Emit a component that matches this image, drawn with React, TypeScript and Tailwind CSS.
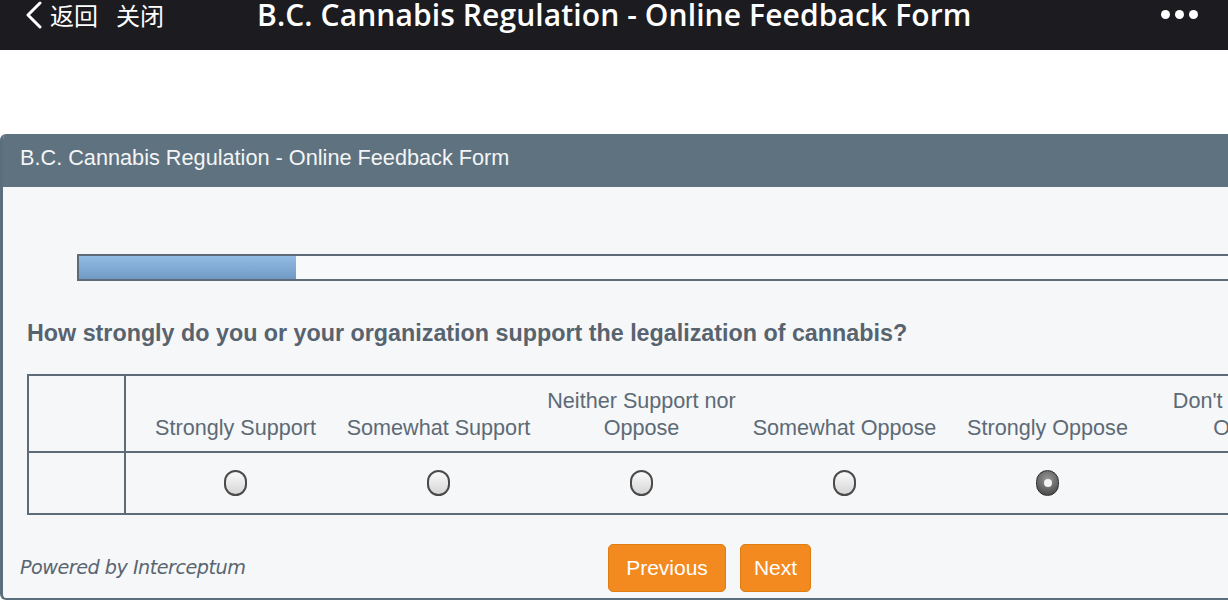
import React from 'react';

const options = [
  'Strongly Support',
  'Somewhat Support',
  'Neither Support nor Oppose',
  'Somewhat Oppose',
  'Strongly Oppose',
  "Don't Know / No Opinion",
];

function Radio({ checked }: { checked?: boolean }) {
  if (checked) {
    return (
      <span className="flex h-[26px] w-[23px] items-center justify-center rounded-full border-[1.5px] border-[#2e2e2e] bg-[radial-gradient(circle_at_50%_35%,#9a9a9a,#3a3a3a)]">
        <span className="h-[8px] w-[8px] rounded-full bg-[#f4f4f4]" />
      </span>
    );
  }
  return (
    <span className="block h-[26px] w-[23px] rounded-full border-2 border-[#4a4a4a] bg-[linear-gradient(180deg,#fafafa,#d6d6d6)]" />
  );
}

export default function App() {
  return (
    <div className="h-[600px] w-[1228px] overflow-hidden bg-white font-['Liberation_Sans',Arial,sans-serif]">
      {/* top bar */}
      <div className="flex h-[50px] items-start bg-[#1c1b20] text-white">
        <div className="flex h-[30px] items-center pl-[24px]">
          <svg width="20" height="28" viewBox="0 0 20 28" fill="none">
            <path d="M16 2 L4 14 L16 26" stroke="white" strokeWidth="3" strokeLinecap="round" strokeLinejoin="round" />
          </svg>
          <span className="ml-[6px] font-['Noto_Sans_CJK_SC',sans-serif] text-[24px] leading-[30px]">返回</span>
          <span className="ml-[18px] font-['Noto_Sans_CJK_SC',sans-serif] text-[24px] leading-[30px]">关闭</span>
        </div>
        <div className="ml-[93px] text-[30px] font-semibold leading-[30px] tracking-[0.1px] font-['Open_Sans',sans-serif]">
          B.C. Cannabis Regulation - Online Feedback Form
        </div>
        <div className="ml-auto mr-[30px] flex h-[28px] items-center gap-[5px]">
          <span className="h-[9px] w-[9px] rounded-full bg-white" />
          <span className="h-[9px] w-[9px] rounded-full bg-white" />
          <span className="h-[9px] w-[9px] rounded-full bg-white" />
        </div>
      </div>

      <div className="pt-[84px]">
        <div className="h-[466px] w-[1260px] overflow-hidden rounded-tl-[6px] rounded-bl-[6px] border-l-[3px] border-b-[2px] border-[#5b6e7c] bg-[#f5f7f9]">
          <div className="flex h-[53px] items-center bg-[#5f7280] pb-[4px] pl-[17px] text-[21.7px] text-[#f3f5f6]">
            B.C. Cannabis Regulation - Online Feedback Form
          </div>

          {/* progress */}
          <div className="ml-[74px] mt-[67px] flex h-[27px] border-[2px] border-[#5d6c78] bg-[#f7f9fa]">
            <div className="w-[217px] bg-[linear-gradient(180deg,#94bde5,#7099c4)]" />
          </div>

          <div className="ml-[24px] mt-[39px] text-[23.3px] font-bold leading-[26px] text-[#57636e]">
            How strongly do you or your organization support the legalization of cannabis?
          </div>

          {/* table */}
          <div className="ml-[24px] mt-[28px] border-y-[2px] border-l-[2px] border-[#5d6c78] text-[21.6px] text-[#5d6a75]">
            <div className="flex h-[77px] border-b-[2px] border-[#5d6c78]">
              <div className="w-[97px] shrink-0 border-r-[2px] border-[#5d6c78]" />
              <div className="flex pl-[8px]">
                {options.map((o) => (
                  <div key={o} className="flex w-[203px] shrink-0 items-end justify-center pb-[10px] text-center leading-[27px]">
                    <span className={o.length > 18 ? 'w-[200px]' : ''}>{o}</span>
                  </div>
                ))}
              </div>
            </div>
            <div className="flex h-[60px]">
              <div className="w-[97px] shrink-0 border-r-[2px] border-[#5d6c78]" />
              <div className="flex pl-[8px]">
                {options.map((o, i) => (
                  <div key={o} className="flex w-[203px] shrink-0 items-center justify-center">
                    <Radio checked={i === 4} />
                  </div>
                ))}
              </div>
            </div>
          </div>

          {/* footer */}
          <div className="mt-[29px] flex items-center">
            <div className="ml-[17px] w-[588px] font-['DejaVu_Sans',sans-serif] text-[19.2px] italic tracking-[-0.5px] text-[#5a6570]">
              Powered by Interceptum
            </div>
            <button className="h-[48px] w-[118px] rounded-[5px] border border-[#e07c14] bg-[#f28a20] text-[21px] text-white">
              Previous
            </button>
            <button className="ml-[14px] h-[48px] w-[71px] rounded-[5px] border border-[#e07c14] bg-[#f28a20] text-[21px] text-white">
              Next
            </button>
          </div>
        </div>
      </div>
    </div>
  );
}
